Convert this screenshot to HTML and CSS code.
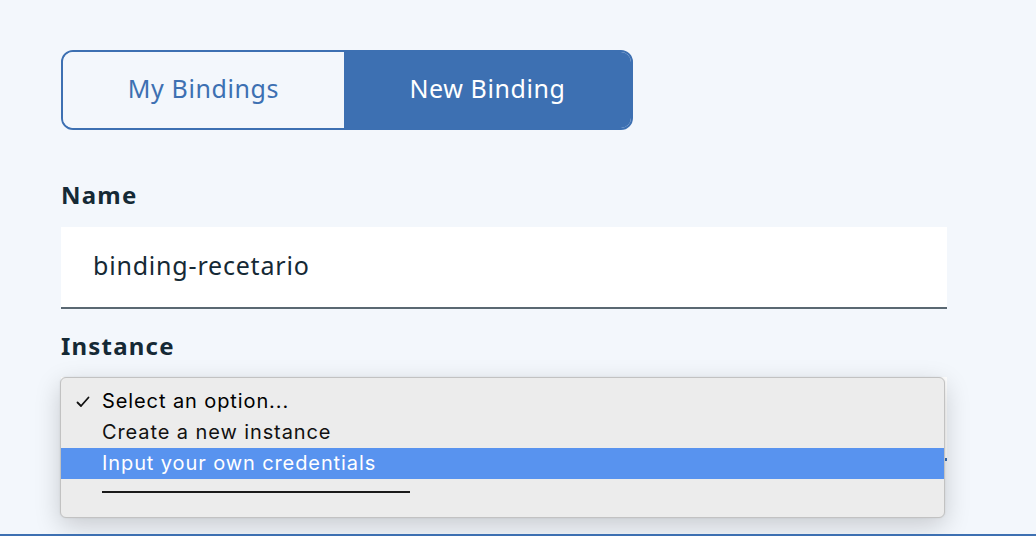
FILE: index.html
```html
<!DOCTYPE html>
<html lang="en">
<head>
<meta charset="utf-8">
<title>New Binding</title>
<link rel="stylesheet" href="styles.css">
</head>
<body>
<div class="page">
  <div class="toggle">
    <div class="tab tab-left">My Bindings</div>
    <div class="tab tab-right">New Binding</div>
  </div>
  <div class="label label-name">Name</div>
  <div class="input">binding-recetario</div>
  <div class="label label-instance">Instance</div>
  <div class="select-wrap">
    <div class="select"></div>
    <div class="popup">
      <div class="opt opt-checked">
        <svg class="check" width="14" height="12" viewBox="0 0 14 12"><path d="M1.5 6.5 L5 10 L12.5 1.5" fill="none" stroke="#111" stroke-width="1.8" stroke-linecap="round" stroke-linejoin="round"/></svg>
        Select an option...
      </div>
      <div class="opt">Create a new instance</div>
      <div class="opt opt-active">Input your own credentials</div>
      <div class="sep-row"><div class="sep"></div></div>
    </div>
  </div>
</div>
<div class="footer-bar"></div>
</body>
</html>
```
FILE: styles.css
```css
html, body {
  margin: 0;
  padding: 0;
}
body {
  background: #f3f7fc;
  font-family: "Noto Sans", "Open Sans", sans-serif;
  color: #152935;
  height: 536px;
  overflow: hidden;
}
.page {
  padding: 50px 89px 0 61px;
}
.toggle {
  display: flex;
  width: 572px;
  height: 80px;
  box-sizing: border-box;
  border: 2px solid #3d70b2;
  border-radius: 12px;
  overflow: hidden;
}
.tab {
  display: flex;
  align-items: center;
  justify-content: center;
  font-size: 25px;
  letter-spacing: 0.6px;
  padding-bottom: 4px;
}
.tab-left {
  width: 281px;
  color: #3d70b2;
  background: #f3f7fc;
}
.tab-right {
  flex: 1;
  color: #ffffff;
  background: #3d70b2;
}
.label {
  font-size: 24px;
  font-weight: 700;
  line-height: 30px;
  letter-spacing: 1.2px;
  color: #152935;
}
.label-name {
  margin-top: 50px;
}
.input {
  margin-top: 17px;
  height: 82px;
  box-sizing: border-box;
  background: #ffffff;
  border-bottom: 2px solid #5a6872;
  display: flex;
  align-items: center;
  padding-left: 32px;
  padding-bottom: 5px;
  font-size: 25px;
  letter-spacing: 0.8px;
  color: #152935;
}
.label-instance {
  margin-top: 22px;
}
.select-wrap {
  position: relative;
  margin-top: 16px;
}
.select {
  height: 81px;
  background: #ffffff;
  border-bottom: 3px solid #3d70b2;
}
.popup {
  position: absolute;
  left: -1px;
  top: 0;
  width: 885px;
  height: 141px;
  box-sizing: border-box;
  background: #ececec;
  border: 1px solid #c2c2c2;
  border-radius: 6px;
  box-shadow: 0 8px 26px rgba(0, 0, 0, 0.18), 0 0 2px rgba(0, 0, 0, 0.1);
  padding-top: 8px;
  font-family: "Inter", "Liberation Sans", sans-serif;
  font-size: 20px;
  letter-spacing: 0.9px;
  color: #111;
}
.opt {
  position: relative;
  height: 31px;
  line-height: 30px;
  padding-left: 41px;
}
.opt-checked {
  color: #000;
}
.check {
  position: absolute;
  left: 15px;
  top: 10px;
}
.opt-active {
  background: #5893ef;
  color: #ffffff;
}
.sep-row {
  padding: 12px 0 0 41px;
}
.sep {
  width: 308px;
  height: 1.5px;
  background: #1a1a1a;
}
.footer-bar {
  position: absolute;
  left: 0;
  top: 534px;
  width: 100%;
  height: 2px;
  background: #3d70b2;
}
```
